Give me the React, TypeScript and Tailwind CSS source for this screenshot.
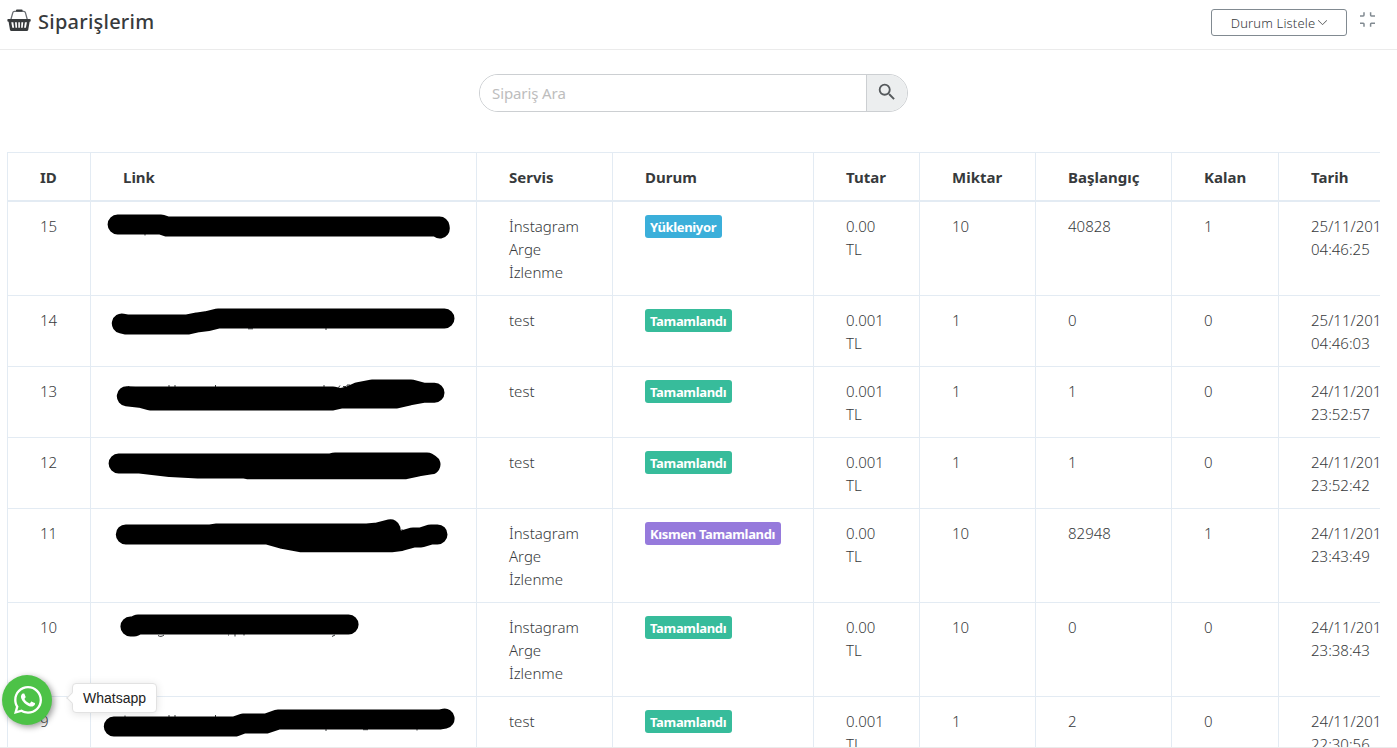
import React from "react";
import { MdSearch } from "react-icons/md";
import { FaWhatsapp } from "react-icons/fa";
import { SlArrowDown } from "react-icons/sl";

type Order = {
  id: string;
  service: string[];
  status: string;
  tone: string;
  amount: string;
  quantity: string;
  start: string;
  left: string;
  date: string[];
  top: number;
  height: number;
  mask: string;
  specks: string;
};

const INFO = "bg-[#3bafda]";
const DONE = "bg-[#37bc9b]";
const PARTIAL = "bg-[#967adc]";
const INSTAGRAM = ["İnstagram", "Arge", "İzlenme"];

const orders: Order[] = [
  {
    id: "15", service: INSTAGRAM, status: "Yükleniyor", tone: INFO, amount: "0.00", quantity: "10", start: "40828", left: "1",
    date: ["25/11/2019", "04:46:25"], top: 202, height: 93,
    mask: "M117.6 224.5H161L167 226.5H439.5L439.8 228.5",
    specks: "M145 234v1.5",
  },
  {
    id: "14", service: ["test"], status: "Tamamlandı", tone: DONE, amount: "0.001", quantity: "1", start: "0", left: "0",
    date: ["25/11/2019", "04:46:03"], top: 296, height: 70,
    mask: "M121.8 323.5L126 324.4H188L198 322.3L208 321L218 318.5H444.5",
    specks: "M248 328.8h5M326 328v2",
  },
  {
    id: "13", service: ["test"], status: "Tamamlandı", tone: DONE, amount: "0.001", quantity: "1", start: "1", left: "0",
    date: ["24/11/2019", "23:52:57"], top: 367, height: 70,
    mask: "M126.8 396.2L135 396.6H333L341 398.3L350 396L359 392L372 389.5H411L423 392.7H434.5H424L409 395.5L397 398.4H341L332 400.4H150L140 397.7Z",
    specks: "M168 386h2M174 386h2M215.5 385v2M323 386h2M338.5 387.5l1.5-2M343 386.5h3M347 386v-1h3",
  },
  {
    id: "12", service: ["test"], status: "Tamamlandı", tone: DONE, amount: "0.001", quantity: "1", start: "1", left: "0",
    date: ["24/11/2019", "23:52:42"], top: 438, height: 70,
    mask: "M118.6 463.5H331L335 462.4H427L430.5 464.5L418 466.5L405 469.3H248L244 468.5H198L170 467L140 463.5Z",
    specks: "",
  },
  {
    id: "11", service: INSTAGRAM, status: "Kısmen Tamamlandı", tone: PARTIAL, amount: "0.00", quantity: "10", start: "82948", left: "1",
    date: ["24/11/2019", "23:43:49"], top: 509, height: 93,
    mask: "M125.8 534.4H211L216 533.5H367L378 532.5L390.5 529.3L392 541L401 540.8L413 537.5H421L431 534.4H437.5H431L421 537.5H413L401 541L391 542.3H302L283 539L267 534.4Z",
    specks: "M402 529v1",
  },
  {
    id: "10", service: INSTAGRAM, status: "Tamamlandı", tone: DONE, amount: "0.00", quantity: "10", start: "0", left: "0",
    date: ["24/11/2019", "23:38:43"], top: 603, height: 93,
    mask: "M130.4 626.5H134L138 624.5H348.6",
    specks: "M158 635.5c2 1.5 4 1 6-.5M228 635h1M235 634v2.5M244 634v1.5M332 636.5l3-1.5",
  },
  {
    id: "9", service: ["test"], status: "Tamamlandı", tone: DONE, amount: "0.001", quantity: "1", start: "2", left: "0",
    date: ["24/11/2019", "22:30:56"], top: 697, height: 70,
    mask: "M113.8 726.5H235L243 723.6H266L278 719.5H440L444.6 718.6",
    specks: "M125 715.5v1.5M168 716h2M174 716h2M215.5 715v2M326 729v2M363 729.7h5M417 729v1.5",
  },
];

const columns = "grid w-[1420px] grid-cols-[83px_386px_136px_201px_106px_116px_136px_107px_149px]";
const cell = "border-l border-[#e3ebf3] pl-8 pt-[13px]";
const headings = ["ID", "Link", "Servis", "Durum", "Tutar", "Miktar", "Başlangıç", "Kalan", "Tarih"];

function Lines({ items }: { items: string[] }) {
  return (
    <div className={cell}>
      {items.map((item) => (
        <div key={item}>{item}</div>
      ))}
    </div>
  );
}

function BasketIcon() {
  return (
    <svg width="24" height="23" viewBox="0 0 24 23" fill="none">
      <path d="M3.9 10.5L5.8 3.6Q6.1 2.4 7.4 2.3H16.8Q18.1 2.4 18.4 3.6L20.3 10.5" stroke="#6b6f74" strokeWidth="1.3" />
      <path d="M10 1.5H14.6" stroke="#373a3c" strokeWidth="2.2" strokeLinecap="round" />
      <path
        fillRule="evenodd"
        fill="#373a3c"
        d="M1 10H23Q23.7 10 23.7 10.8V12Q23.7 12.7 22.6 12.8L21.2 21Q20.9 22 19.8 22H4.4Q3.3 22 3 21L1.6 12.8Q.4 12.7 .4 12V10.8Q.4 10 1 10ZM4.3 13.2L5.3 18.8H7.1L6.3 13.2ZM8 13.2L8.5 18.8H10.1L9.8 13.2ZM11.3 13.2V18.8H12.9V13.2ZM14.4 13.2L14.1 18.8H15.7L16.2 13.2ZM17.9 13.2L17.1 18.8H18.9L19.9 13.2Z"
      />
    </svg>
  );
}

function CompressIcon() {
  return (
    <svg className="ml-[13px] mt-[3px]" width="15" height="15" viewBox="0 0 15 15" fill="none" stroke="#818a91" strokeWidth="1.5">
      <path d="M0 3.9H3.2Q4 3.9 4 3.1V.3M15 3.9H11.4Q10.6 3.9 10.6 3.1V.3M0 11.2H3.2Q4 11.2 4 12V14.8M15 11.2H11.4Q10.6 11.2 10.6 12V14.8" />
    </svg>
  );
}

export default function App() {
  return (
    <div className="relative flex h-[748px] w-[1397px] flex-col overflow-hidden bg-white font-['Noto_Sans','Open_Sans',sans-serif] text-[#373a3c]">
      <header className="flex h-[50px] shrink-0 items-start justify-between border-b border-[#ebebeb] pl-[7px] pr-[22px]">
        <div className="flex items-start gap-[7px] pt-[9px]">
          <BasketIcon />
          <h1 className="text-[20px] font-medium leading-[26px] tracking-[0.24px]">Siparişlerim</h1>
        </div>
        <div className="flex items-start pt-[9px]">
          <button className="flex h-[27px] w-[136px] items-center justify-center gap-[3px] rounded-[3px] border border-[#818a91] text-[13px] font-light leading-5">
            <span className="tracking-[0.15px]">Durum Listele</span>
            <SlArrowDown size={9} />
          </button>
          <CompressIcon />
        </div>
      </header>

      <main className="h-[697px] shrink-0 overflow-hidden pl-[7px] pr-[17px]">
        <div className="ml-[472px] mt-6 flex h-[38px] w-[429px] overflow-hidden rounded-full border border-[#cccfd2]">
          <input
            className="min-w-0 flex-1 bg-white pl-3 text-[15px] tracking-[-0.1px] outline-none placeholder:text-[#bdbdbd] placeholder:opacity-100"
            placeholder="Sipariş Ara"
          />
          <button className="flex w-[41px] items-center justify-center border-l border-[#cccfd2] bg-[#eceeef] pb-0.5 text-[#55595c]">
            <MdSearch size={22} />
          </button>
        </div>

        <div className="mt-10 overflow-hidden text-[15px] font-light leading-[23px]">
          <div className={`${columns} h-[50px] border-b-2 border-t border-b-[#e3ebf3] border-t-[#e3ebf3] font-bold`}>
            {headings.map((heading) => (
              <div key={heading} className={cell}>{heading}</div>
            ))}
          </div>
          {orders.map((order) => (
            <div key={order.id} className={`${columns} border-b border-[#e3ebf3]`} style={{ height: order.height + 1 }}>
              <div className={cell}>{order.id}</div>
              <div className="border-l border-[#e3ebf3]">
                <svg width="385" height={order.height} viewBox={`91 ${order.top} 385 ${order.height}`}>
                  <path d={order.specks} fill="none" stroke="#373a3c" strokeWidth="1" />
                  <path d={order.mask} fill={order.mask.endsWith("Z") ? "#000" : "none"} stroke="#000" strokeWidth="20" strokeLinecap="round" strokeLinejoin="round" />
                </svg>
              </div>
              <Lines items={order.service} />
              <div className={cell}>
                <span className={`inline-block h-[23px] rounded-[3px] pl-[5px] pr-[5.5px] pt-px align-top text-[13px] font-bold leading-[23px] tracking-[-0.34px] text-white ${order.tone}`}>
                  {order.status}
                </span>
              </div>
              <Lines items={[order.amount, "TL"]} />
              <div className={cell}>{order.quantity}</div>
              <div className={cell}>{order.start}</div>
              <div className={cell}>{order.left}</div>
              <Lines items={order.date} />
            </div>
          ))}
        </div>
      </main>
      <div className="h-px shrink-0 bg-[#ebebeb]" />

      <div className="absolute left-[2px] top-[675px] flex items-center">
        <div className="flex size-[50px] items-center justify-center rounded-full bg-[#4dc247] pl-[2px] text-white shadow-[2px_2px_6px_rgba(0,0,0,0.4)]">
          <FaWhatsapp size={32} />
        </div>
        <div className="relative -mt-1 ml-5 flex h-[30px] w-[85px] items-center justify-center rounded border border-[#e2e2e2] bg-white font-['Liberation_Sans',Arial,sans-serif] text-[14px] text-[#222] shadow-[0_1px_8px_rgba(0,0,0,0.12)]">
          <span className="absolute -left-[5px] top-[10px] size-[8px] rotate-45 border-b border-l border-[#e2e2e2] bg-white" />
          Whatsapp
        </div>
      </div>
    </div>
  );
}
